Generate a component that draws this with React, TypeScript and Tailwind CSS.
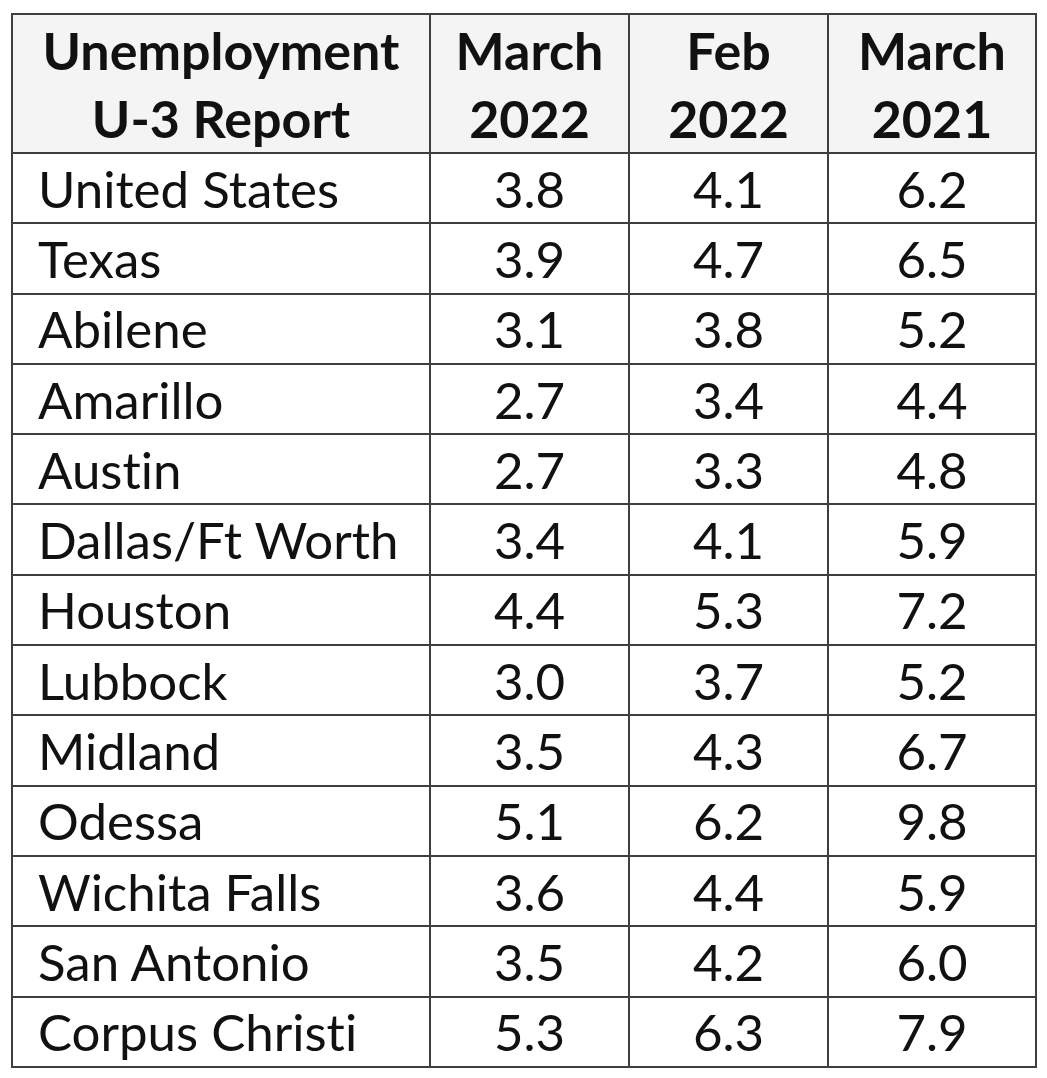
const rows: [string, string, string, string][] = [
  ['United States', '3.8', '4.1', '6.2'],
  ['Texas', '3.9', '4.7', '6.5'],
  ['Abilene', '3.1', '3.8', '5.2'],
  ['Amarillo', '2.7', '3.4', '4.4'],
  ['Austin', '2.7', '3.3', '4.8'],
  ['Dallas/Ft Worth', '3.4', '4.1', '5.9'],
  ['Houston', '4.4', '5.3', '7.2'],
  ['Lubbock', '3.0', '3.7', '5.2'],
  ['Midland', '3.5', '4.3', '6.7'],
  ['Odessa', '5.1', '6.2', '9.8'],
  ['Wichita Falls', '3.6', '4.4', '5.9'],
  ['San Antonio', '3.5', '4.2', '6.0'],
  ['Corpus Christi', '5.3', '6.3', '7.9'],
];

const headers = [
  ['Unemployment', 'U-3 Report'],
  ['March', '2022'],
  ['Feb', '2022'],
  ['March', '2021'],
];

export default function App() {
  return (
    <div className="min-h-[1078px] bg-white pl-[11px] pt-[13px] font-['Lato',sans-serif] text-[#111] [font-variant-ligatures:none]">
      <table className="border-collapse table-fixed border-2 border-[#3f3f3f]">
        <colgroup>
          <col className="w-[418px]" />
          <col className="w-[199px]" />
          <col className="w-[199px]" />
          <col className="w-[208px]" />
        </colgroup>
        <thead>
          <tr className="h-[139px] bg-[#f4f4f4]">
            {headers.map((h, i) => (
              <th
                key={i}
                className="border-2 border-[#3f3f3f] text-center align-middle text-[52px] font-bold leading-[68px]"
              >
                {h[0]}
                <br />
                {h[1]}
              </th>
            ))}
          </tr>
        </thead>
        <tbody>
          {rows.map((r) => (
            <tr key={r[0]} className="h-[70.3px]">
              <td className="border-2 border-[#3f3f3f] pl-[25px] text-[51px] leading-none whitespace-nowrap">
                {r[0]}
              </td>
              {r.slice(1).map((v, i) => (
                <td key={i} className="border-2 border-[#3f3f3f] text-center text-[51px] leading-none">
                  {v}
                </td>
              ))}
            </tr>
          ))}
        </tbody>
      </table>
    </div>
  );
}
